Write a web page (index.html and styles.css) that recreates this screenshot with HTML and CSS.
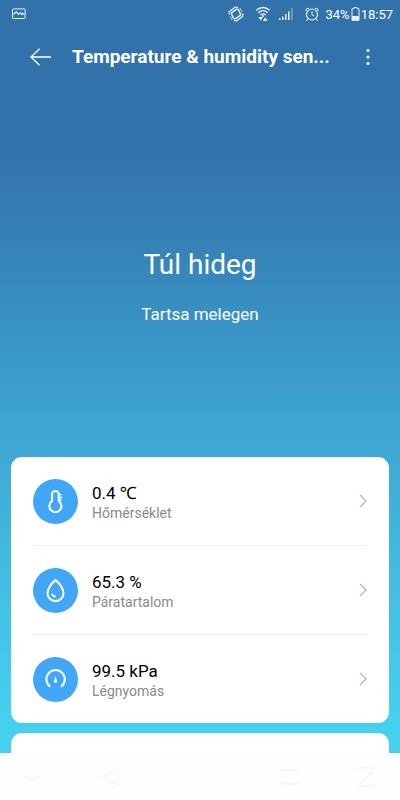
FILE: index.html
```html
<!DOCTYPE html>
<html lang="hu">
<head>
<meta charset="utf-8">
<meta name="viewport" content="width=device-width, initial-scale=1">
<title>Temperature &amp; humidity sensor</title>
<link rel="stylesheet" href="styles.css">
</head>
<body>
<div class="status">
  <svg class="status-picture" width="14" height="12" viewBox="0 0 14 12" fill="none" stroke="currentColor"><rect x=".5" y=".9" width="12.6" height="9.6" rx=".8"/><path d="M1.500 6.500 4.300 3.800 6.500 6.200 8.800 4.600 10 6.600 11.300 5.600 12.500 6.500" stroke-width="1.200"/></svg>
  <svg class="status-rotate" width="16" height="16" viewBox="0 0 16 16" fill="none" stroke="currentColor" stroke-linejoin="round"><path d="M4 6.300 9 3.200 10.500 3.700 12.600 8.400 12 9.700 7 12.800 5.500 12.300 3.400 7.600z" stroke-width="1.400"/><path d="M1.300 8.500V5.600L7 1.300h3M14.700 7.500v2.900L9 14.700H6" stroke-width="1.600" opacity=".8"/><path d="M2 10.200 4.200 14M14 5.800 11.800 2" opacity=".8"/></svg>
  <svg class="status-wifi" width="16" height="16" viewBox="0 0 16 16" fill="none" stroke="currentColor" stroke-width="1.300"><path d="M1.200 4.300q6.800-5.600 13.600 0M3.200 6.700q4.800-4 9.600 0M5.300 9q2.700-2.200 5.400 0"/><path d="M3.400 11h4.600l-2.300 3.600zM7.800 15h4.800l-2.400-3.800z" fill="currentColor" stroke="none"/><circle cx="8" cy="10" r="1" fill="currentColor" stroke="none"/></svg>
  <svg class="status-signal" width="16" height="14" viewBox="0 0 16 14" fill="currentColor"><path d="M1 11h1.500v2H1zM4 9.500h1.500V13H4zM7 7.300h1.500V13H7zM10 4.600h1.500V13H10z"/><path d="M13.300 1h1.200v12h-1.200z" opacity=".5"/></svg>
  <svg class="status-alarm" width="14" height="15" viewBox="0 0 14 15" fill="none" stroke="currentColor"><circle cx="7" cy="7.500" r="5.500" stroke-width="1.200"/><path d="M7 4.200v3.600l2.200 1.100M.8 4.200Q.4 1 4 1.200M13.200 4.200Q13.600 1 10 1.200M2.800 12 1.200 14M11.200 12l1.600 2"/></svg>
  <span>34%</span>
  <svg class="status-battery" width="9" height="14" viewBox="0 0 9 14"><path d="M3 .5h3v1.200h2v11.600H1V1.700h2z" fill="none" stroke="currentColor"/><path d="M1 9h7v4H1z" fill="currentColor"/></svg>
  <span>18:57</span>
</div>
<header class="bar">
  <button class="bar-button" aria-label="Vissza"><svg width="22" height="18" viewBox="0 0 22 18" fill="none" stroke="currentColor" stroke-width="1.300"><path d="M21 9H1M9.500.7 1 9l8.500 8.300"/></svg></button>
  <h1>Temperature &amp; humidity sen...</h1>
  <button class="bar-button" aria-label="Menü"><svg width="4" height="18" viewBox="0 0 4 18" fill="currentColor"><circle cx="2" cy="2.500" r="1.500"/><circle cx="2" cy="9" r="1.500"/><circle cx="2" cy="15.500" r="1.500"/></svg></button>
</header>
<main>
  <section class="hero">
    <h2>Túl hideg</h2>
    <p>Tartsa melegen</p>
  </section>
  <section class="card">
    <a class="row" href="#temperature">
      <svg class="badge" viewBox="0 0 44 44" fill="none" stroke="#fff" stroke-width="2"><path d="M18.600 21.600V15a3.300 3.300 0 0 1 6.600 0v6.600a5.900 5.900 0 1 1-6.600 0z"/><path d="M25.500 15.300H28M25.500 18h3.200M25.500 20.600H28" stroke-width="1.400"/></svg>
      <span class="reading"><strong>0.4 ℃</strong><small>Hőmérséklet</small></span>
      <svg class="chevron" viewBox="0 0 8 14"><path d="M1 .8 7 7l-6 6.200"/></svg>
    </a>
    <a class="row" href="#humidity">
      <svg class="badge" viewBox="0 0 44 44" fill="none" stroke="#fff" stroke-width="2"><path d="M22 11.800C19.300 13.700 14.200 19.400 14.200 24.600a7.800 7.800 0 0 0 15.600 0C29.800 19.400 24.700 13.700 22 11.800z" stroke-linejoin="round"/><path d="M18.300 25.300q1.100 2.400 3.900 2.800" stroke-width="1.800"/></svg>
      <span class="reading"><strong>65.3 %</strong><small>Páratartalom</small></span>
      <svg class="chevron" viewBox="0 0 8 14"><path d="M1 .8 7 7l-6 6.200"/></svg>
    </a>
    <a class="row" href="#pressure">
      <svg class="badge" viewBox="0 0 44 44" fill="none" stroke="#fff" stroke-width="2"><path d="M16.700 29a9 9 0 1 1 10.800 0"/><path d="M22.100 18.300 21 22.500a1.600 1.600 0 1 0 2.200 0z" fill="#fff" stroke="none"/></svg>
      <span class="reading"><strong>99.5 kPa</strong><small>Légnyomás</small></span>
      <svg class="chevron" viewBox="0 0 8 14"><path d="M1 .8 7 7l-6 6.200"/></svg>
    </a>
  </section>
  <section class="card card-next"></section>
</main>
<nav class="nav">
  <button aria-label="Elrejtés"><svg width="16" height="10" viewBox="0 0 16 10"><path d="m1 4 7 4.500L15 4"/><path d="M6 1.500h4l-2 2z" fill="currentColor" stroke="none"/></svg></button>
  <button aria-label="Vissza"><svg width="18" height="18" viewBox="0 0 18 18"><path d="M17 .8 1 9l16 8.300"/><path d="M16.800 3v12" stroke-dasharray="2 2"/></svg></button>
  <button aria-label="Kezdőlap"><svg width="20" height="16" viewBox="0 0 20 16"><path d="M1 5V2.500Q1 1 2.500 1h15Q19 1 19 2.500V5M1 11v2.500Q1 15 2.500 15h15q1.500 0 1.500-1.500V11"/></svg></button>
  <button aria-label="Alkalmazások"><svg width="19" height="20" viewBox="0 0 19 20"><path d="M1 3q0-2 2-2h13q2 0 2 2M1 17q0 2 2 2h13q2 0 2-2M4 15.500 15 5M10.500 5H15v4"/></svg></button>
</nav>
</body>
</html>
```

FILE: styles.css
```css
* { box-sizing: border-box; }

body {
  margin: 0;
  min-height: 100vh;
  display: flex;
  flex-direction: column;
  font-family: Roboto, "Noto Sans", sans-serif;
  color: #fff;
  background: linear-gradient(180deg, #3272aa 0%, #3272aa 18%, #3686ba 33%, #3a9bca 46%, #3fa8d4 56%, #43bfe3 74%, #46d0f0 90%);
}

h1, h2, p { margin: 0; font-weight: 400; }

button {
  padding: 0;
  border: 0;
  background: none;
  color: inherit;
  display: grid;
  place-items: center;
}

.status {
  height: 28px;
  padding: 0 7px 0 12px;
  display: flex;
  align-items: center;
  font-size: 13px;
}

.status svg { flex: none; opacity: 0.9; }
.status-picture { margin-right: auto; }
.status-wifi, .status-alarm { margin-left: 11px; }
.status-signal { margin-left: 7px; }
.status-alarm { margin-right: 6px; }
.status-battery { margin: 0 1px; }

.bar {
  height: 58px;
  padding: 0 20px 0 21px;
  display: flex;
  align-items: center;
}

.bar h1 {
  flex: 1;
  margin-left: 11px;
  font-size: 19px;
  line-height: 24px;
  font-weight: 700;
  white-space: nowrap;
}

.bar-button { width: 40px; height: 40px; }
.bar-button:last-child { width: 24px; }

main { flex: 1; display: flex; flex-direction: column; }

.hero {
  height: 371px;
  padding-top: 161px;
  text-align: center;
}

.hero h2 { font-size: 28px; line-height: 36px; }
.hero p { margin-top: 19px; font-size: 17px; line-height: 24px; }

.card {
  margin: 0 11px;
  padding: 0 22px;
  border-radius: 11px;
  background: #fff;
}

.card-next {
  flex: 1;
  margin-top: 10px;
  min-height: 20px;
  border-radius: 11px 11px 0 0;
}

.row {
  height: 88px;
  display: flex;
  align-items: center;
  color: #000;
  text-decoration: none;
}

.row + .row { height: 89px; border-top: 1px solid #f0f0f0; }

.badge {
  width: 45px;
  height: 45px;
  border-radius: 50%;
  background: #42a6f6;
}

.reading { flex: 1; margin: 3px 0 0 14px; display: grid; }
.reading strong { font-size: 17px; line-height: 20px; font-weight: 400; }
.reading small { font-size: 14px; line-height: 20px; color: #8a8a8a; }

.chevron {
  width: 8px;
  height: 14px;
  fill: none;
  stroke: #b0b0b0;
  stroke-width: 1.2;
}

.nav {
  height: 47px;
  padding: 0 24px;
  display: grid;
  grid-template-columns: 16px 1fr 1fr 20px;
  align-items: center;
  color: #f0f0f0;
  background: #fefefe;
}

.nav svg { fill: none; stroke: currentColor; }
.nav button:nth-child(2) { justify-self: start; margin-left: 62px; }
.nav button:nth-child(3) { justify-self: end; margin-right: 57px; }
```
